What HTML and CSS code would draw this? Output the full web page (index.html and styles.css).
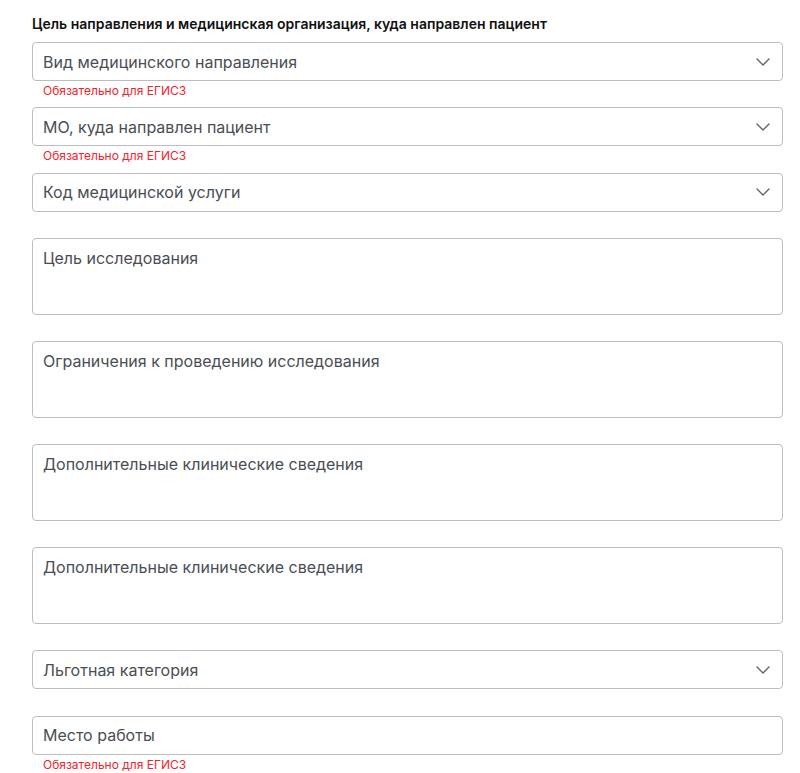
FILE: index.html
```html
<!DOCTYPE html>
<html lang="ru">
<head>
<meta charset="utf-8">
<title>Направление</title>
<link rel="stylesheet" href="styles.css">
</head>
<body>
<div class="form">
  <div class="title">Цель направления и медицинская организация, куда направлен пациент</div>

  <div class="item">
    <div class="control select"><span class="ph">Вид медицинского направления</span>
      <svg class="chev" viewBox="0 0 14 8" width="14" height="8"><path d="M1 1l6 6 6-6" fill="none" stroke="#5f6368" stroke-width="1.4" stroke-linecap="round" stroke-linejoin="round"/></svg>
    </div>
    <div class="hint">Обязательно для ЕГИСЗ</div>
  </div>

  <div class="item">
    <div class="control select"><span class="ph">МО, куда направлен пациент</span>
      <svg class="chev" viewBox="0 0 14 8" width="14" height="8"><path d="M1 1l6 6 6-6" fill="none" stroke="#5f6368" stroke-width="1.4" stroke-linecap="round" stroke-linejoin="round"/></svg>
    </div>
    <div class="hint">Обязательно для ЕГИСЗ</div>
  </div>

  <div class="item">
    <div class="control select"><span class="ph">Код медицинской услуги</span>
      <svg class="chev" viewBox="0 0 14 8" width="14" height="8"><path d="M1 1l6 6 6-6" fill="none" stroke="#5f6368" stroke-width="1.4" stroke-linecap="round" stroke-linejoin="round"/></svg>
    </div>
    <div class="hint"></div>
  </div>

  <div class="item">
    <div class="control area"><span class="ph">Цель исследования</span></div>
    <div class="hint"></div>
  </div>

  <div class="item">
    <div class="control area"><span class="ph">Ограничения к проведению исследования</span></div>
    <div class="hint"></div>
  </div>

  <div class="item">
    <div class="control area"><span class="ph">Дополнительные клинические сведения</span></div>
    <div class="hint"></div>
  </div>

  <div class="item">
    <div class="control area"><span class="ph">Дополнительные клинические сведения</span></div>
    <div class="hint"></div>
  </div>

  <div class="item">
    <div class="control select"><span class="ph">Льготная категория</span>
      <svg class="chev" viewBox="0 0 14 8" width="14" height="8"><path d="M1 1l6 6 6-6" fill="none" stroke="#5f6368" stroke-width="1.4" stroke-linecap="round" stroke-linejoin="round"/></svg>
    </div>
    <div class="hint"></div>
  </div>

  <div class="item">
    <div class="control input"><span class="ph">Место работы</span></div>
    <div class="hint">Обязательно для ЕГИСЗ</div>
  </div>
</div>
</body>
</html>
```

FILE: styles.css
```css
* { box-sizing: border-box; }
html, body { margin: 0; padding: 0; background: #ffffff; }
body {
  font-family: Inter, "Noto Sans", "Liberation Sans", sans-serif;
  color: #4a4e54;
}
.form {
  display: flex;
  flex-direction: column;
  padding: 14px 17px 0 32px;
}
.title {
  font-size: 14px;
  font-weight: 600;
  line-height: 20px;
  color: #111111;
  margin-bottom: 8px;
}
.item {
  display: flex;
  flex-direction: column;
}
.control {
  border: 1px solid #bdbdbd;
  border-radius: 4px;
  background: #fff;
  font-size: 16px;
  line-height: 24px;
  color: #4a4e54;
}
.select, .input {
  height: 39px;
  display: flex;
  align-items: center;
  justify-content: space-between;
  padding: 0 12px 0 10px;
}
.area {
  height: 76.6px;
  padding: 7px 10px;
}
.chev { display: block; flex: none; }
.hint {
  height: 26.4px;
  padding: 2px 0 0 11px;
  font-size: 12px;
  line-height: 16px;
  color: #f5222d;
}
```
